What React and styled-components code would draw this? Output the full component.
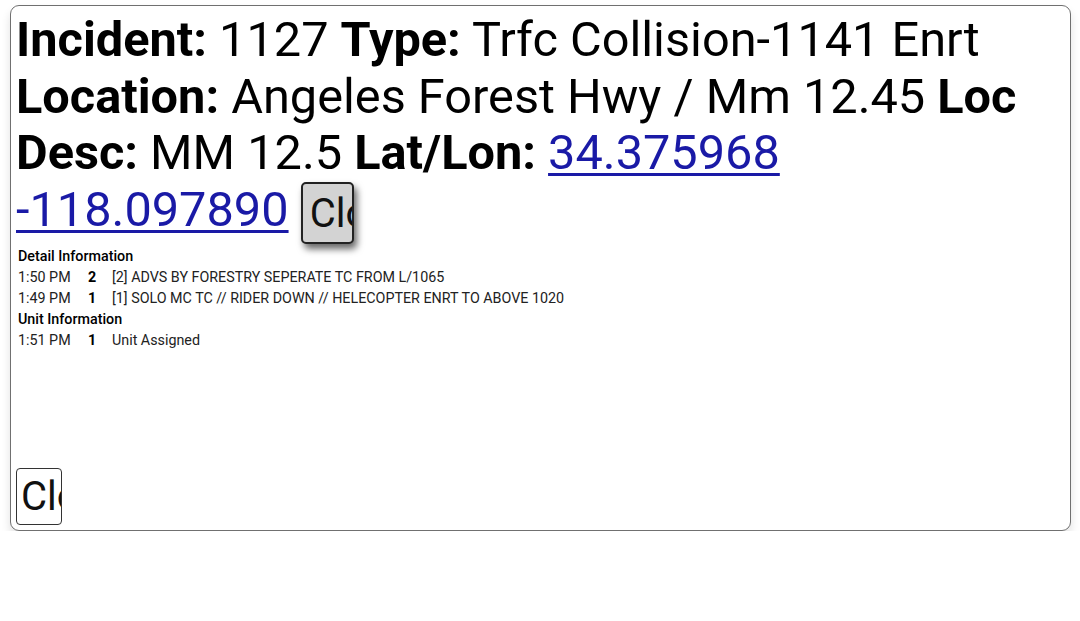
import React from 'react';
import styled, { createGlobalStyle } from 'styled-components';

const Global = createGlobalStyle`
  html, body {
    margin: 0;
    padding: 0;
    background: #fff;
    font-family: Roboto, "Noto Sans", Arial, sans-serif;
    color: #000;
  }
`;

const details = [
  { time: '1:50 PM', num: '2', text: '[2] ADVS BY FORESTRY SEPERATE TC FROM L/1065' },
  { time: '1:49 PM', num: '1', text: '[1] SOLO MC TC // RIDER DOWN // HELECOPTER ENRT TO ABOVE 1020' },
];

const units = [
  { time: '1:51 PM', num: '1', text: 'Unit Assigned' },
];

const App = () => (
  <Page>
    <Global />
    <Popup>
      <Heading>
        <b>Incident:</b> 1127 <b>Type:</b> Trfc Collision-1141 Enrt <b>Location:</b> Angeles Forest Hwy / Mm 12.45 <b>Loc Desc:</b> MM 12.5 <b>Lat/Lon:</b>{' '}
        <MapLink href="#">34.375968 -118.097890</MapLink>{' '}
        <CloseRaised>Close</CloseRaised>
      </Heading>
      <InfoTable>
        <tbody>
          <tr><SectionHead colSpan={3}>Detail Information</SectionHead></tr>
          {details.map((d) => (
            <tr key={d.time + d.num}>
              <TimeCell>{d.time}</TimeCell>
              <NumCell>{d.num}</NumCell>
              <TextCell>{d.text}</TextCell>
            </tr>
          ))}
          <tr><SectionHead colSpan={3}>Unit Information</SectionHead></tr>
          {units.map((u) => (
            <tr key={u.time + u.num}>
              <TimeCell>{u.time}</TimeCell>
              <NumCell>{u.num}</NumCell>
              <TextCell>{u.text}</TextCell>
            </tr>
          ))}
        </tbody>
      </InfoTable>
      <Footer>
        <ClosePlain>Close</ClosePlain>
      </Footer>
    </Popup>
  </Page>
);

const Page = styled.div`
  padding: 5px 9px 0 10px;
`;

const Popup = styled.div`
  border: 1px solid #707070;
  border-radius: 9px;
  background: #fff;
  padding: 0 6px 5px 5px;
  box-shadow: 0 6px 10px rgba(0, 0, 0, 0.12);
`;

const Heading = styled.div`
  font-size: 48.7px;
  line-height: 56.5px;
  margin-top: 6px;
  b {
    font-weight: 700;
  }
`;

const MapLink = styled.a`
  color: #1a1aa6;
  text-decoration: underline;
  text-decoration-thickness: 3px;
  text-underline-offset: 4px;
`;

const ButtonBase = styled.button`
  font-family: Roboto, Arial, sans-serif;
  font-size: 40px;
  color: #111;
  overflow: hidden;
  white-space: nowrap;
  text-align: left;
  cursor: pointer;
`;

const CloseRaised = styled(ButtonBase)`
  width: 53px;
  height: 62px;
  padding: 0 0 0 7px;
  background: #d3d3d3;
  border: 2px solid #222;
  border-radius: 5px;
  box-shadow: 3px 5px 7px rgba(0, 0, 0, 0.6);
  vertical-align: -1px;
`;

const InfoTable = styled.table`
  border-collapse: collapse;
  font-size: 14.3px;
  margin-top: 2px;
  td {
    padding: 0;
    line-height: 21px;
  }
`;

const SectionHead = styled.td`
  font-weight: 500;
  padding-left: 2px !important;
`;

const TimeCell = styled.td`
  padding-left: 2px !important;
  width: 70px;
  color: #222;
`;

const NumCell = styled.td`
  font-weight: 700;
  width: 24px;
`;

const TextCell = styled.td`
  color: #222;
`;

const Footer = styled.div`
  margin-top: 117px;
`;

const ClosePlain = styled(ButtonBase)`
  width: 46px;
  height: 57px;
  padding: 0 0 0 4px;
  background: #fff;
  border: 1px solid #333;
  border-radius: 4px;
`;

export default App;
